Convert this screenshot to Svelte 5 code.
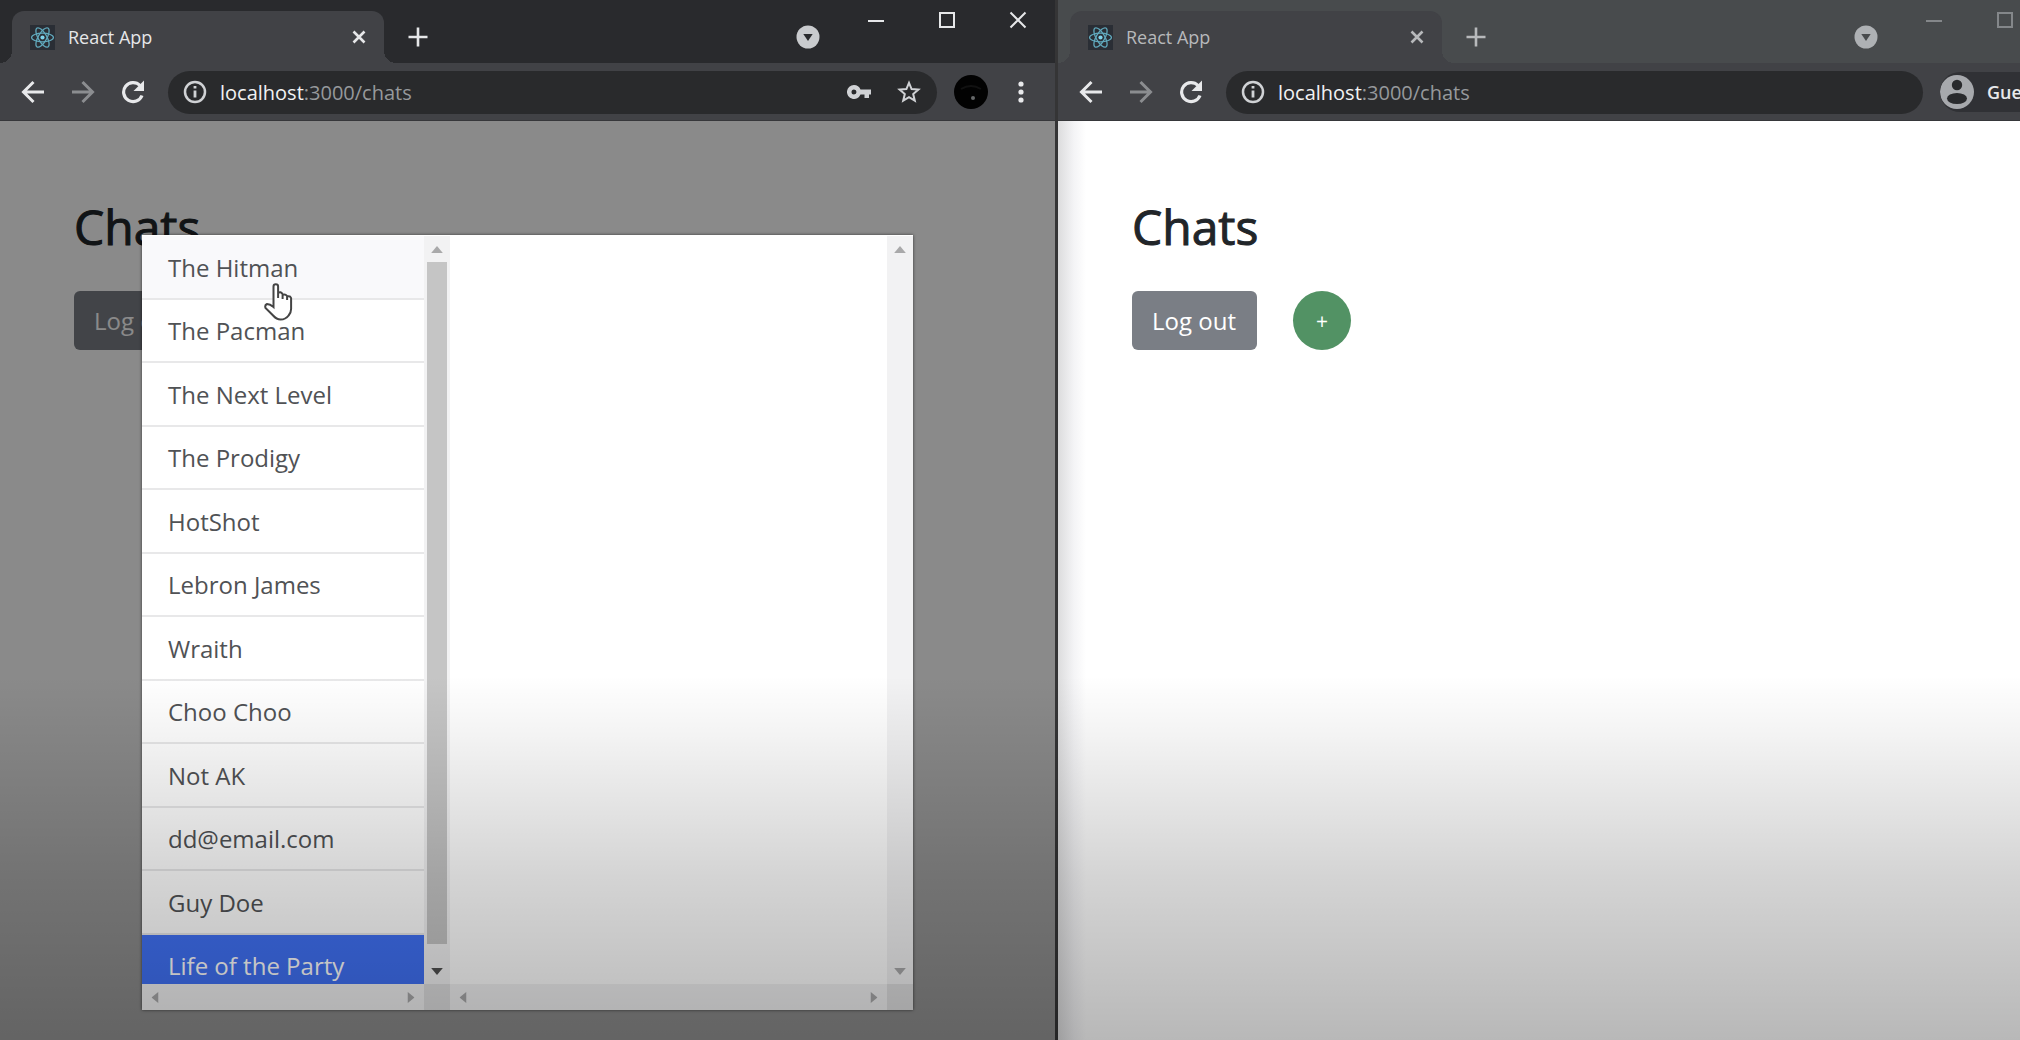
<script>
  const users = [
    'The Hitman', 'The Pacman', 'The Next Level', 'The Prodigy', 'HotShot', 'Lebron James',
    'Wraith', 'Choo Choo', 'Not AK', 'dd@email.com', 'Guy Doe', 'Life of the Party'
  ];
  const windows = [
    { id: 'front', active: true },
    { id: 'back', active: false }
  ];
  const hovered = 'The Hitman';
  const selected = 'Life of the Party';
</script>

{#snippet arrow(dir)}
  <button class="arrow {dir}" type="button" aria-label="Scroll {dir}" tabindex="-1">
    <svg viewBox="0 0 10 6" width="12" height="7"><path d="M5 0L10 6H0z" /></svg>
  </button>
{/snippet}

<main class="desktop">
  {#each windows as win (win.id)}
    <section class="window" class:inactive={!win.active} aria-label="React App">
      <header class="titlebar">
        <div class="tab">
          <svg class="favicon" viewBox="0 0 24 24" aria-hidden="true">
            <rect width="24" height="24" fill="#2a2e35" />
            <g fill="none" stroke="#61a9bd" stroke-width="1.2">
              <ellipse cx="12" cy="12" rx="10.5" ry="4.1" />
              <ellipse cx="12" cy="12" rx="10.5" ry="4.1" transform="rotate(60 12 12)" />
              <ellipse cx="12" cy="12" rx="10.5" ry="4.1" transform="rotate(120 12 12)" />
            </g>
            <circle cx="12" cy="12" r="2" fill="#7fd4ec" />
          </svg>
          <span class="tab-title">React App</span>
          <button class="tab-close" type="button" aria-label="Close tab">
            <svg viewBox="0 0 14 14" width="14" height="14"><path d="M1.5 1.5l11 11M12.500 1.500l-11 11" stroke-width="2.600" /></svg>
          </button>
        </div>
        <button class="new-tab" type="button" aria-label="New tab">
          <svg viewBox="0 0 20 20" width="20" height="20"><path d="M10 0.500v19M0.500 10h19" stroke-width="2.600" /></svg>
        </button>
        <button class="tab-search" type="button" aria-label="Search tabs">
          <svg viewBox="0 0 24 24" width="24" height="24">
            <circle class="disc" cx="12" cy="12" r="11.500" />
            <path class="tri" d="M7.300 9h9.400L12 16z" />
          </svg>
        </button>
        <div class="controls">
          <button type="button" aria-label="Minimize"><svg viewBox="0 0 18 18" width="18" height="18"><path d="M1 10h16" stroke-width="2" /></svg></button>
          <button type="button" aria-label="Maximize"><svg viewBox="0 0 18 18" width="18" height="18"><path d="M2 2h14v14H2z" stroke-width="2" /></svg></button>
          <button type="button" aria-label="Close"><svg viewBox="0 0 18 18" width="18" height="18"><path d="M1.500 1.500l15 15M16.500 1.500l-15 15" stroke-width="2" /></svg></button>
        </div>
      </header>

      <nav class="toolbar" aria-label="Browser toolbar">
        <button class="nav-btn" type="button" aria-label="Back">
          <svg viewBox="0 0 24 24" width="24" height="24"><path d="M23 12H3M12.500 2L2.500 12l10 10" stroke-width="3" /></svg>
        </button>
        <button class="nav-btn dim" type="button" aria-label="Forward">
          <svg viewBox="0 0 24 24" width="24" height="24"><path d="M1 12H21M11.500 2l10 10-10 10" stroke-width="3" /></svg>
        </button>
        <button class="nav-btn" type="button" aria-label="Reload">
          <svg viewBox="0 0 24 24" width="24" height="24">
            <path d="M21 15.500A9.500 9.500 0 1 1 19 5.500" stroke-width="3.200" />
            <path class="solid" d="M23 0.500v10.500H12.500z" />
          </svg>
        </button>
        <div class="omnibox">
          <svg class="info" viewBox="0 0 24 24" width="24" height="24">
            <circle cx="12" cy="12" r="10" stroke-width="2.500" />
            <path d="M12 10.500v7M12 6v2.600" stroke-width="2.800" />
          </svg>
          <span class="url"><b>localhost</b>:3000/chats</span>
          {#if win.active}
            <button class="omni-btn" type="button" aria-label="Manage passwords">
              <svg viewBox="0 0 24 14" width="24" height="14">
                <path class="solid" fill-rule="evenodd" d="M7 0a7 7 0 0 1 6.500 4.500H24v5h-2V13h-4.500V9.500h-4A7 7 0 1 1 7 0zM7 4.500a2.500 2.500 0 1 0 0 5 2.500 2.500 0 0 0 0-5z" />
              </svg>
            </button>
            <button class="omni-btn" type="button" aria-label="Bookmark this page">
              <svg viewBox="0 0 24 24" width="24" height="24">
                <path d="M12 2.800l2.600 6.300 6.800.5-5.200 4.400 1.600 6.700-5.800-3.600-5.800 3.600L7.800 14 2.600 9.600l6.800-.5z" stroke-width="2" />
              </svg>
            </button>
          {/if}
        </div>
        {#if win.active}
          <button class="avatar" type="button" aria-label="Profile">
            <svg viewBox="0 0 34 34" width="34" height="34">
              <circle cx="17" cy="17" r="17" fill="#020202" />
              <path d="M7 14q10-6 20 0" stroke="#111" stroke-width="2" />
              <circle cx="19" cy="23" r="2" fill="#66686a" />
            </svg>
          </button>
        {:else}
          <button class="guest" type="button">
            <svg viewBox="0 0 34 34" width="34" height="34">
              <circle cx="17" cy="17" r="17" fill="#a7a9ad" />
              <circle cx="17" cy="10" r="5.200" fill="#292a2d" />
              <ellipse cx="17" cy="23.500" rx="10" ry="5.500" fill="#292a2d" />
            </svg>
            <span>Guest</span>
          </button>
        {/if}
        <button class="menu" type="button" aria-label="Menu">
          <svg viewBox="0 0 6 22" width="6" height="22">
            <g class="solid"><circle cx="3" cy="3" r="2.600" /><circle cx="3" cy="11" r="2.600" /><circle cx="3" cy="19" r="2.600" /></g>
          </svg>
        </button>
      </nav>

      <div class="page">
        <h1>Chats</h1>
        <div class="actions">
          <button class="logout" type="button">Log out</button>
          <button class="add" type="button" aria-label="New chat">+</button>
        </div>

        {#if win.active}
          <div class="backdrop">
            <div class="modal" role="dialog" aria-label="Choose a user">
              <div class="pane users">
                <ul>
                  {#each users as user (user)}
                    <li>
                      <button type="button" class:hovered={user === hovered} class:selected={user === selected}>{user}</button>
                    </li>
                  {/each}
                </ul>
                <div class="bar vertical enabled">
                  {@render arrow('up')}
                  <div class="thumb"></div>
                  {@render arrow('down')}
                </div>
                <div class="bar horizontal">{@render arrow('left')}{@render arrow('right')}</div>
                <div class="corner"></div>
              </div>
              <div class="pane detail">
                <div class="blank"></div>
                <div class="bar vertical">{@render arrow('up')}{@render arrow('down')}</div>
                <div class="bar horizontal">{@render arrow('left')}{@render arrow('right')}</div>
                <div class="corner"></div>
              </div>
            </div>
          </div>
        {/if}
      </div>
    </section>
  {/each}

  <svg class="cursor" viewBox="0 0 30 38" width="30" height="38" aria-hidden="true">
    <path d="M9.500 24V3.500a2.300 2.300 0 0 1 4.600 0V15v-5q2.500-2 4.500 1v5-4q2.500-1.500 4.500 1v4-3.500q3-1 4 1.500V26q0 3.500-2.500 6.500-3 4-8 4-4 0-7.500-4L1.500 25q-1-3 1.500-4 3 0 6.500 3z" />
  </svg>
  <div class="fade"></div>
</main>

<style>
  :global(body) { margin: 0; }
  * { box-sizing: border-box; }
  button {
    margin: 0;
    padding: 0;
    border: 0;
    background: none;
    font: inherit;
    color: inherit;
  }
  svg { display: block; flex: none; fill: none; stroke: currentColor; }
  .desktop {
    position: relative;
    display: flex;
    height: 100vh;
    overflow: hidden;
    background: #fff;
    color: #212529;
    font-family: "Open Sans", "Noto Sans", sans-serif;
  }
  .window {
    flex: 0 0 calc(50% + 48px);
    display: flex;
    flex-direction: column;
    border-right: 3px solid #353536;
    --frame: #292a2d;
    --glyph: #e6e7e9;
  }
  .inactive { --frame: #484b4d; --glyph: #b7b9bb; }

  .titlebar {
    display: flex;
    align-items: flex-end;
    height: 63px;
    padding-left: 12px;
    background: var(--frame);
    color: var(--glyph);
  }
  .tab {
    position: relative;
    display: flex;
    align-items: center;
    width: 372px;
    height: 52px;
    padding: 0 18px;
    border-radius: 12px 12px 0 0;
    background: #414246;
  }
  .tab::before,
  .tab::after {
    content: "";
    position: absolute;
    bottom: 0;
    width: 12px;
    height: 12px;
  }
  .tab::before { right: 100%; background: radial-gradient(circle at 0 0, transparent 12px, #414246 12px); }
  .tab::after { left: 100%; background: radial-gradient(circle at 100% 0, transparent 12px, #414246 12px); }
  .favicon { width: 25px; height: 25px; stroke: none; }
  .tab-title { flex: 1; margin-left: 13px; font-size: 18px; }
  .new-tab { margin: 0 0 16px 24px; }
  .tab-search { margin: 0 20px 14px auto; color: #c9cbce; }
  .disc { fill: currentColor; stroke: none; }
  .tri { fill: var(--frame); stroke: none; }
  .inactive .tab-search { color: #aeb1b4; }
  .controls { display: flex; align-self: flex-start; padding-right: 2px; }
  .controls button { display: flex; justify-content: center; width: 71px; padding: 11px 0; }
  .inactive .controls { color: #84878a; }

  .toolbar {
    display: flex;
    align-items: center;
    height: 58px;
    padding: 1px 1px 0 8px;
    border-bottom: 1px solid #36373a;
    background: #414246;
    color: #e8e9eb;
  }
  .nav-btn { display: flex; justify-content: center; width: 50px; }
  .dim { color: #8b8d90; }
  .solid { fill: currentColor; stroke: none; }
  .omnibox {
    flex: 1;
    display: flex;
    align-items: center;
    height: 43px;
    margin: 0 17px 0 10px;
    padding: 0 16px 0 15px;
    border-radius: 22px;
    background: #292a2c;
    color: #d0d2d5;
  }
  .url { flex: 1; margin-left: 13px; font-size: 20px; color: #96999c; }
  .url b { font-weight: 400; color: #f1f2f3; }
  .omni-btn { margin-left: 26px; }
  .avatar circle, .guest svg { stroke: none; }
  .guest {
    display: flex;
    align-items: center;
    width: 106px;
    height: 40px;
    overflow: hidden;
    gap: 13px;
    border-radius: 20px;
    background: #303135;
    font-size: 18px;
    font-weight: 600;
  }
  .menu { display: flex; justify-content: center; width: 66px; }

  .page {
    position: relative;
    flex: 1;
    min-height: 0;
    padding: 74px 74px 0;
    background: #fff;
  }
  .inactive .page { background: linear-gradient(90deg, #dcdcdd, #f4f4f6 16px, #fff 28px); }
  h1 {
    margin: 0;
    font-size: 48px;
    line-height: 64px;
    font-weight: 500;
    -webkit-text-stroke: 1px currentColor;
  }
  .actions { display: flex; gap: 36px; margin-top: 32px; }
  .logout {
    height: 59px;
    padding: 0 21px 0 20px;
    border-radius: 6px;
    background: #7a7e85;
    color: #fff;
    font-size: 24px;
  }
  .add {
    width: 58px;
    height: 59px;
    border-radius: 50%;
    background: #529264;
    color: #fff;
    font-size: 21px;
  }

  .backdrop {
    position: absolute;
    inset: 0;
    display: flex;
    padding: 114px 142px 30px;
    background: rgb(0 0 0 / 46%);
  }
  .modal {
    flex: 1;
    display: flex;
    min-width: 0;
    padding: 1px 0 0;
    background: #fff;
    box-shadow: 0 0 3px rgb(0 0 0 / 60%);
  }
  .pane {
    display: grid;
    grid-template: minmax(0, 1fr) 26px / minmax(0, 1fr) 26px;
  }
  .users { flex: 40 1 0; }
  .detail { flex: 60 1 0; }
  ul { margin: 0; padding: 0; list-style: none; overflow: hidden; }
  li button {
    display: block;
    width: 100%;
    height: 64px;
    padding: 0 26px;
    border-bottom: 2px solid #e8e8e9;
    color: #505255;
    font-size: 24px;
    text-align: left;
    white-space: nowrap;
  }
  li:nth-child(even) button { height: 63px; }
  li .hovered { background: #f9f9fb; }
  li .selected { border-color: #3b6df5; background: #4071f5; color: #fff; }
  .bar { display: flex; justify-content: space-between; background: #f2f2f3; }
  .vertical { flex-direction: column; }
  .corner { background: #dfdfe0; }
  .thumb { flex: 1; margin: 0 3px; background: #c5c5c5; }
  .arrow {
    display: flex;
    align-items: center;
    justify-content: center;
    width: 26px;
    height: 26px;
    color: #a9a9aa;
  }
  .arrow path { fill: currentColor; stroke: none; }
  .down svg { transform: rotate(180deg); }
  .left svg { transform: rotate(-90deg); }
  .right svg { transform: rotate(90deg); }
  .enabled .down { height: 40px; padding-top: 14px; color: #505050; }

  .cursor { position: absolute; left: 264px; top: 283px; fill: #fff; stroke: #444; stroke-width: 2; }
  .fade {
    position: absolute;
    inset: auto 0 0;
    height: 35%;
    background: linear-gradient(rgb(0 0 0 / 0%), rgb(0 0 0 / 6%) 20%, rgb(0 0 0 / 17%) 55%, rgb(0 0 0 / 28%));
    pointer-events: none;
  }
</style>
